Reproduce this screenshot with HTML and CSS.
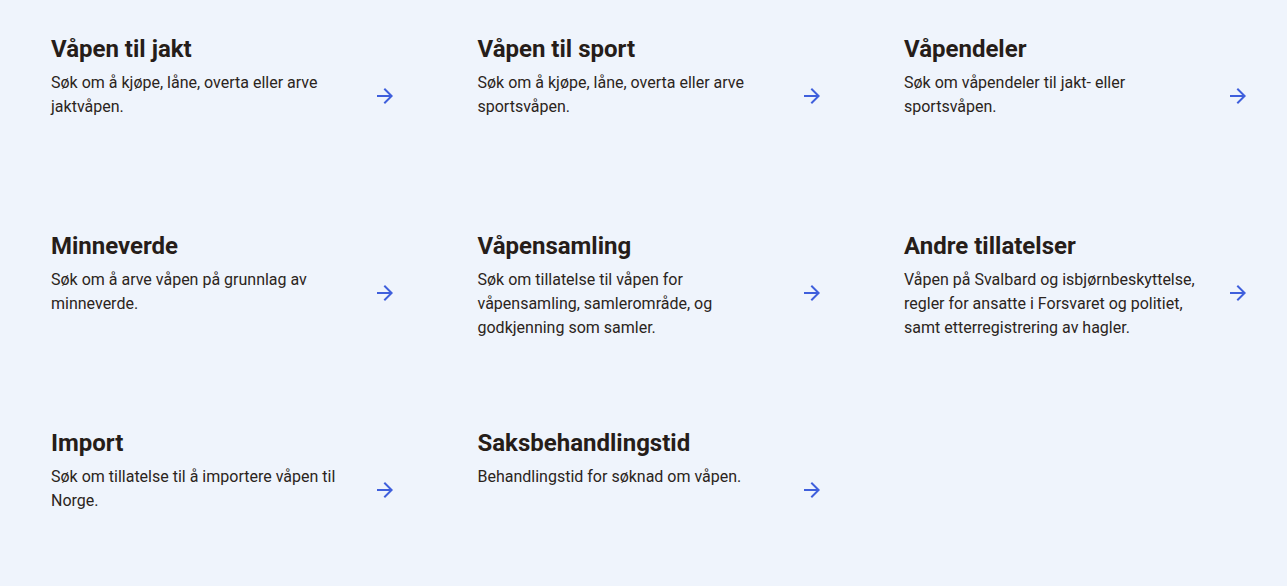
FILE: index.html
```html
<!DOCTYPE html>
<html lang="no">
<head>
<meta charset="utf-8">
<title>Våpen</title>
<link rel="stylesheet" href="styles.css">
</head>
<body>
<main class="page">
  <div class="grid">
    <a class="card" href="#">
      <div class="card-body">
        <h2 class="card-title">Våpen til jakt</h2>
        <p class="card-text">Søk om å kjøpe, låne, overta eller arve jaktvåpen.</p>
      </div>
      <svg class="arrow" viewBox="0 0 24 24" width="24" height="24" aria-hidden="true"><path d="M12 4l-1.41 1.41L16.17 11H4v2h12.17l-5.58 5.59L12 20l8-8z"/></svg>
    </a>
    <a class="card" href="#">
      <div class="card-body">
        <h2 class="card-title">Våpen til sport</h2>
        <p class="card-text">Søk om å kjøpe, låne, overta eller arve sportsvåpen.</p>
      </div>
      <svg class="arrow" viewBox="0 0 24 24" width="24" height="24" aria-hidden="true"><path d="M12 4l-1.41 1.41L16.17 11H4v2h12.17l-5.58 5.59L12 20l8-8z"/></svg>
    </a>
    <a class="card" href="#">
      <div class="card-body">
        <h2 class="card-title">Våpendeler</h2>
        <p class="card-text">Søk om våpendeler til jakt- eller sportsvåpen.</p>
      </div>
      <svg class="arrow" viewBox="0 0 24 24" width="24" height="24" aria-hidden="true"><path d="M12 4l-1.41 1.41L16.17 11H4v2h12.17l-5.58 5.59L12 20l8-8z"/></svg>
    </a>
    <a class="card" href="#">
      <div class="card-body">
        <h2 class="card-title">Minneverde</h2>
        <p class="card-text">Søk om å arve våpen på grunnlag av minneverde.</p>
      </div>
      <svg class="arrow" viewBox="0 0 24 24" width="24" height="24" aria-hidden="true"><path d="M12 4l-1.41 1.41L16.17 11H4v2h12.17l-5.58 5.59L12 20l8-8z"/></svg>
    </a>
    <a class="card" href="#">
      <div class="card-body">
        <h2 class="card-title">Våpensamling</h2>
        <p class="card-text">Søk om tillatelse til våpen for våpensamling, samlerområde, og godkjenning som samler.</p>
      </div>
      <svg class="arrow" viewBox="0 0 24 24" width="24" height="24" aria-hidden="true"><path d="M12 4l-1.41 1.41L16.17 11H4v2h12.17l-5.58 5.59L12 20l8-8z"/></svg>
    </a>
    <a class="card" href="#">
      <div class="card-body">
        <h2 class="card-title">Andre tillatelser</h2>
        <p class="card-text">Våpen på Svalbard og isbjørnbeskyttelse, regler for ansatte i Forsvaret og politiet, samt etterregistrering av hagler.</p>
      </div>
      <svg class="arrow" viewBox="0 0 24 24" width="24" height="24" aria-hidden="true"><path d="M12 4l-1.41 1.41L16.17 11H4v2h12.17l-5.58 5.59L12 20l8-8z"/></svg>
    </a>
    <a class="card" href="#">
      <div class="card-body">
        <h2 class="card-title">Import</h2>
        <p class="card-text">Søk om tillatelse til å importere våpen til Norge.</p>
      </div>
      <svg class="arrow" viewBox="0 0 24 24" width="24" height="24" aria-hidden="true"><path d="M12 4l-1.41 1.41L16.17 11H4v2h12.17l-5.58 5.59L12 20l8-8z"/></svg>
    </a>
    <a class="card" href="#">
      <div class="card-body">
        <h2 class="card-title">Saksbehandlingstid</h2>
        <p class="card-text">Behandlingstid for søknad om våpen.</p>
      </div>
      <svg class="arrow" viewBox="0 0 24 24" width="24" height="24" aria-hidden="true"><path d="M12 4l-1.41 1.41L16.17 11H4v2h12.17l-5.58 5.59L12 20l8-8z"/></svg>
    </a>
  </div>
</main>
</body>
</html>
```

FILE: styles.css
```css
html, body {
  margin: 0;
  padding: 0;
  background: #eff4fc;
}

body {
  font-family: Roboto, "Liberation Sans", Arial, sans-serif;
  color: #2b2420;
  height: 586px;
  overflow: hidden;
}

.page {
  padding: 35px 0 0 51px;
}

.grid {
  display: grid;
  grid-template-columns: repeat(3, 346px);
  column-gap: 80.5px;
  row-gap: 75px;
}

.card {
  display: flex;
  align-items: center;
  justify-content: space-between;
  min-height: 122px;
  color: inherit;
  text-decoration: none;
}

.card-body {
  align-self: flex-start;
  width: 296px;
}

.card-title {
  margin: 0 0 8px;
  font-size: 24px;
  line-height: 28px;
  font-weight: 700;
  color: #261d19;
}

.card-text {
  margin: 0;
  font-size: 16px;
  line-height: 24px;
  font-weight: 400;
  color: #2b2420;
}

.arrow {
  flex: none;
  fill: #3f5fdc;
}
```
